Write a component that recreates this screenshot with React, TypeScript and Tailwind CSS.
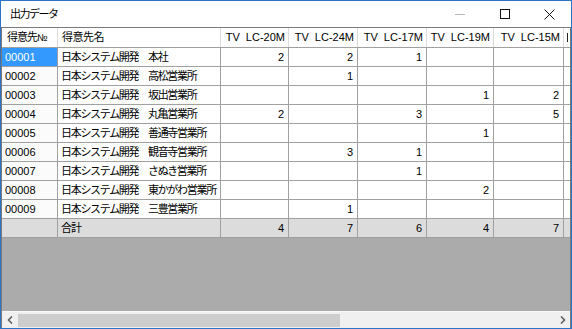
import React from "react";

const FONT = { fontFamily: '"Liberation Sans", "Noto Sans CJK JP", sans-serif' };

const columns = ["TV  LC-20M", "TV  LC-24M", "TV  LC-17M", "TV  LC-19M", "TV  LC-15M"];
const colWidths = ["w-[68px]", "w-[69px]", "w-[69px]", "w-[67px]", "w-[70px]"];

const rows = [
  { no: "00001", name: "日本システム開発\u3000本社", qty: ["2", "2", "1", "", ""] },
  { no: "00002", name: "日本システム開発\u3000高松営業所", qty: ["", "1", "", "", ""] },
  { no: "00003", name: "日本システム開発\u3000坂出営業所", qty: ["", "", "", "1", "2"] },
  { no: "00004", name: "日本システム開発\u3000丸亀営業所", qty: ["2", "", "3", "", "5"] },
  { no: "00005", name: "日本システム開発\u3000善通寺営業所", qty: ["", "", "", "1", ""] },
  { no: "00006", name: "日本システム開発\u3000観音寺営業所", qty: ["", "3", "1", "", ""] },
  { no: "00007", name: "日本システム開発\u3000さぬき営業所", qty: ["", "", "1", "", ""] },
  { no: "00008", name: "日本システム開発\u3000東かがわ営業所", qty: ["", "", "", "2", ""] },
  { no: "00009", name: "日本システム開発\u3000三豊営業所", qty: ["", "1", "", "", ""] },
];

const totals = ["4", "7", "6", "4", "7"];

const App = () => {
  return (
    <div
      style={FONT}
      className="flex h-[329px] w-[572px] flex-col overflow-hidden border border-[#2b74c7] bg-white text-black select-none"
    >
      {/* Title bar */}
      <div className="flex h-[26px] shrink-0 items-center bg-white">
        <span className="pl-[9px] text-[11px] tracking-[-1.5px]">出力データ</span>
        <div className="ml-auto flex h-full items-center">
          <div className="flex h-full w-[46px] items-center justify-center">
            <div className="h-px w-[10px] bg-[#b8b8b8]" />
          </div>
          <div className="flex h-full w-[44px] items-center justify-center">
            <div className="h-[10px] w-[10px] border border-[#111]" />
          </div>
          <div className="flex h-full w-[44px] items-center justify-center">
            <svg width="11" height="11" viewBox="0 0 11 11">
              <path d="M0.5 0.5 L10.5 10.5 M10.5 0.5 L0.5 10.5" stroke="#111" strokeWidth="1" />
            </svg>
          </div>
        </div>
      </div>

      {/* Grid */}
      <div className="flex min-h-0 flex-1 flex-col border-t border-l border-r border-[#7a7a7a] bg-[#ababab]">
        <div className="flex flex-col overflow-hidden text-[11px]">
          {/* Header */}
          <div className="flex h-[20px] shrink-0 border-b border-[#a0a0a0] bg-white">
            <div className="flex w-[56px] shrink-0 items-center border-r border-[#dcdcdc] pl-[5px] whitespace-nowrap">
              <span className="tracking-[-1px]">得意先</span>
              <span className="text-[10px] tracking-[-1px]">№</span>
            </div>
            <div className="flex w-[163px] shrink-0 items-center border-r border-[#dcdcdc] pl-[4px] tracking-[-0.5px]">
              得意先名
            </div>
            {columns.map((c, i) => (
              <div
                key={c}
                className={`flex ${colWidths[i]} shrink-0 items-center justify-end border-r border-[#dcdcdc] pr-[3px] whitespace-pre`}
              >
                {c}
              </div>
            ))}
            <div className="flex flex-1 items-center pl-[3px]">
              <div className="h-[9px] w-px bg-[#222]" />
            </div>
          </div>

          {/* Rows */}
          {rows.map((r, idx) => (
            <div key={r.no} className="flex h-[19px] shrink-0 border-b border-[#a0a0a0] bg-white">
              <div
                className={`flex w-[56px] shrink-0 items-center border-r border-[#a0a0a0] pl-[3px] ${
                  idx === 0 ? "bg-[#3399ff] text-white" : "bg-[#fbfbfb]"
                }`}
              >
                {r.no}
              </div>
              <div className="flex w-[163px] shrink-0 items-center border-r border-[#a0a0a0] pl-[3px] tracking-[-1.3px] whitespace-pre">
                {r.name}
              </div>
              {r.qty.map((q, i) => (
                <div
                  key={i}
                  className={`flex ${colWidths[i]} shrink-0 items-center justify-end border-r border-[#a0a0a0] pr-[4px]`}
                >
                  {q}
                </div>
              ))}
              <div className="flex-1" />
            </div>
          ))}

          {/* Total */}
          <div className="flex h-[19px] shrink-0 border-b border-[#a0a0a0] bg-[#dcdcdc]">
            <div className="w-[56px] shrink-0 border-r border-[#a0a0a0]" />
            <div className="flex w-[163px] shrink-0 items-center border-r border-[#a0a0a0] pl-[3px] tracking-[-1px]">
              合計
            </div>
            {totals.map((t, i) => (
              <div
                key={i}
                className={`flex ${colWidths[i]} shrink-0 items-center justify-end border-r border-[#a0a0a0] pr-[4px]`}
              >
                {t}
              </div>
            ))}
            <div className="flex-1" />
          </div>
        </div>

        <div className="flex-1" />

        {/* Horizontal scrollbar */}
        <div className="flex h-[17px] shrink-0 items-center border-t border-[#f7f7f7] bg-[#f0f0f0]">
          <div className="flex h-full w-[16px] shrink-0 items-center justify-center">
            <svg width="7" height="8" viewBox="0 0 7 8">
              <path d="M5 0.5 L1.5 4 L5 7.5" stroke="#606060" strokeWidth="1.6" fill="none" />
            </svg>
          </div>
          <div className="flex h-full flex-1 items-center">
            <div className="h-[13px] w-[322px] bg-[#cdcdcd]" />
          </div>
          <div className="flex h-full w-[16px] shrink-0 items-center justify-center">
            <svg width="7" height="8" viewBox="0 0 7 8">
              <path d="M2 0.5 L5.5 4 L2 7.5" stroke="#606060" strokeWidth="1.6" fill="none" />
            </svg>
          </div>
        </div>
      </div>
    </div>
  );
};

export default App;
